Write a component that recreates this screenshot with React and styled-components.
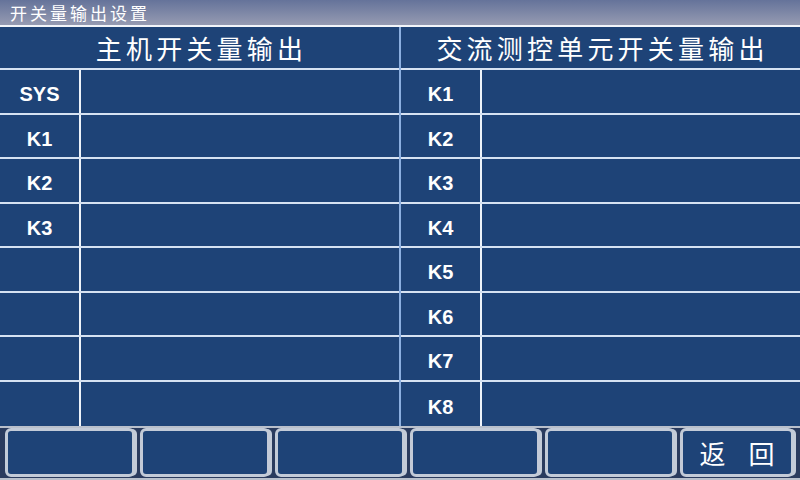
import styled, { createGlobalStyle } from "styled-components";

const GlobalStyle = createGlobalStyle`
  html, body {
    margin: 0;
    padding: 0;
    background: #1e4377;
  }
  * {
    box-sizing: border-box;
  }
`;

const hostRows = ["SYS", "K1", "K2", "K3", "", "", "", ""];
const unitRows = ["K1", "K2", "K3", "K4", "K5", "K6", "K7", "K8"];
const buttons = ["", "", "", "", "", "返回"];

function Panel({ title, rows, divider }) {
  return (
    <Column $divider={divider}>
      <Header>{title}</Header>
      {rows.map((label, i) => (
        <Row key={i}>
          <Label>{label}</Label>
          <Value />
        </Row>
      ))}
    </Column>
  );
}

export default function App() {
  return (
    <>
      <GlobalStyle />
      <Screen>
        <TitleBar>开关量输出设置</TitleBar>
        <Table>
          <Panel title="主机开关量输出" rows={hostRows} />
          <Panel title="交流测控单元开关量输出" rows={unitRows} divider />
        </Table>
        <ButtonBar>
          {buttons.map((text, i) => (
            <SoftKey key={i} $last={i === buttons.length - 1}>
              {text && <KeyText>{text}</KeyText>}
            </SoftKey>
          ))}
        </ButtonBar>
      </Screen>
    </>
  );
}

const Screen = styled.div`
  width: 800px;
  height: 480px;
  display: flex;
  flex-direction: column;
  background: #1e4377;
  overflow: hidden;
  font-family: "Noto Sans CJK SC", "Liberation Sans", sans-serif;
  color: #ffffff;
`;

const TitleBar = styled.div`
  height: 27px;
  flex: none;
  padding: 0 0 0 10px;
  display: flex;
  align-items: center;
  background: linear-gradient(#65739a, #969bb2);
  border-bottom: 2px solid #f2f5fa;
  font-size: 17px;
  letter-spacing: 3px;
  line-height: 1;
  color: #ffffff;
`;

const Table = styled.div`
  flex: 1;
  display: grid;
  grid-template-columns: 399px 1fr;
  min-height: 0;
`;

const Column = styled.div`
  display: grid;
  grid-template-rows: 43px repeat(8, 1fr);
  border-left: ${(p) => (p.$divider ? "2px solid #8cafe0" : "none")};
`;

const Header = styled.div`
  display: flex;
  align-items: center;
  justify-content: center;
  padding-left: 4px;
  border-bottom: 2px solid #d6e2f2;
  font-size: 26px;
  letter-spacing: 4.2px;
  line-height: 1;
`;

const Row = styled.div`
  display: grid;
  grid-template-columns: 81px 1fr;
  border-bottom: 2px solid #d6e2f2;
  &:last-child {
    border-bottom: none;
  }
`;

const Label = styled.div`
  display: flex;
  align-items: center;
  justify-content: center;
  border-right: 2px solid #eef3fa;
  font-family: "Liberation Sans", Arial, sans-serif;
  font-weight: bold;
  font-size: 20px;
  padding-top: 7px;
`;

const Value = styled.div``;

const ButtonBar = styled.div`
  height: 54px;
  flex: none;
  display: flex;
  gap: 5px;
  padding: 2px 6px 2px 5px;
  background: #2a3b5e;
  border-top: 2px solid #b9c0cc;
  border-bottom: 2px solid #b9c0cc;
`;

const SoftKey = styled.div`
  width: ${(p) => (p.$last ? "auto" : "130px")};
  flex: ${(p) => (p.$last ? "1" : "none")};
  margin-top: -2px;
  margin-bottom: -1px;
  display: flex;
  align-items: center;
  justify-content: center;
  background: #1e4377;
  border: 3px solid #c3cbd8;
  border-radius: 6px;
  box-shadow: 3px 0 0 -1px #c3cbd8;
`;

const KeyText = styled.span`
  font-size: 26px;
  letter-spacing: 23px;
  margin-right: -23px;
  white-space: nowrap;
  line-height: 1;
`;
